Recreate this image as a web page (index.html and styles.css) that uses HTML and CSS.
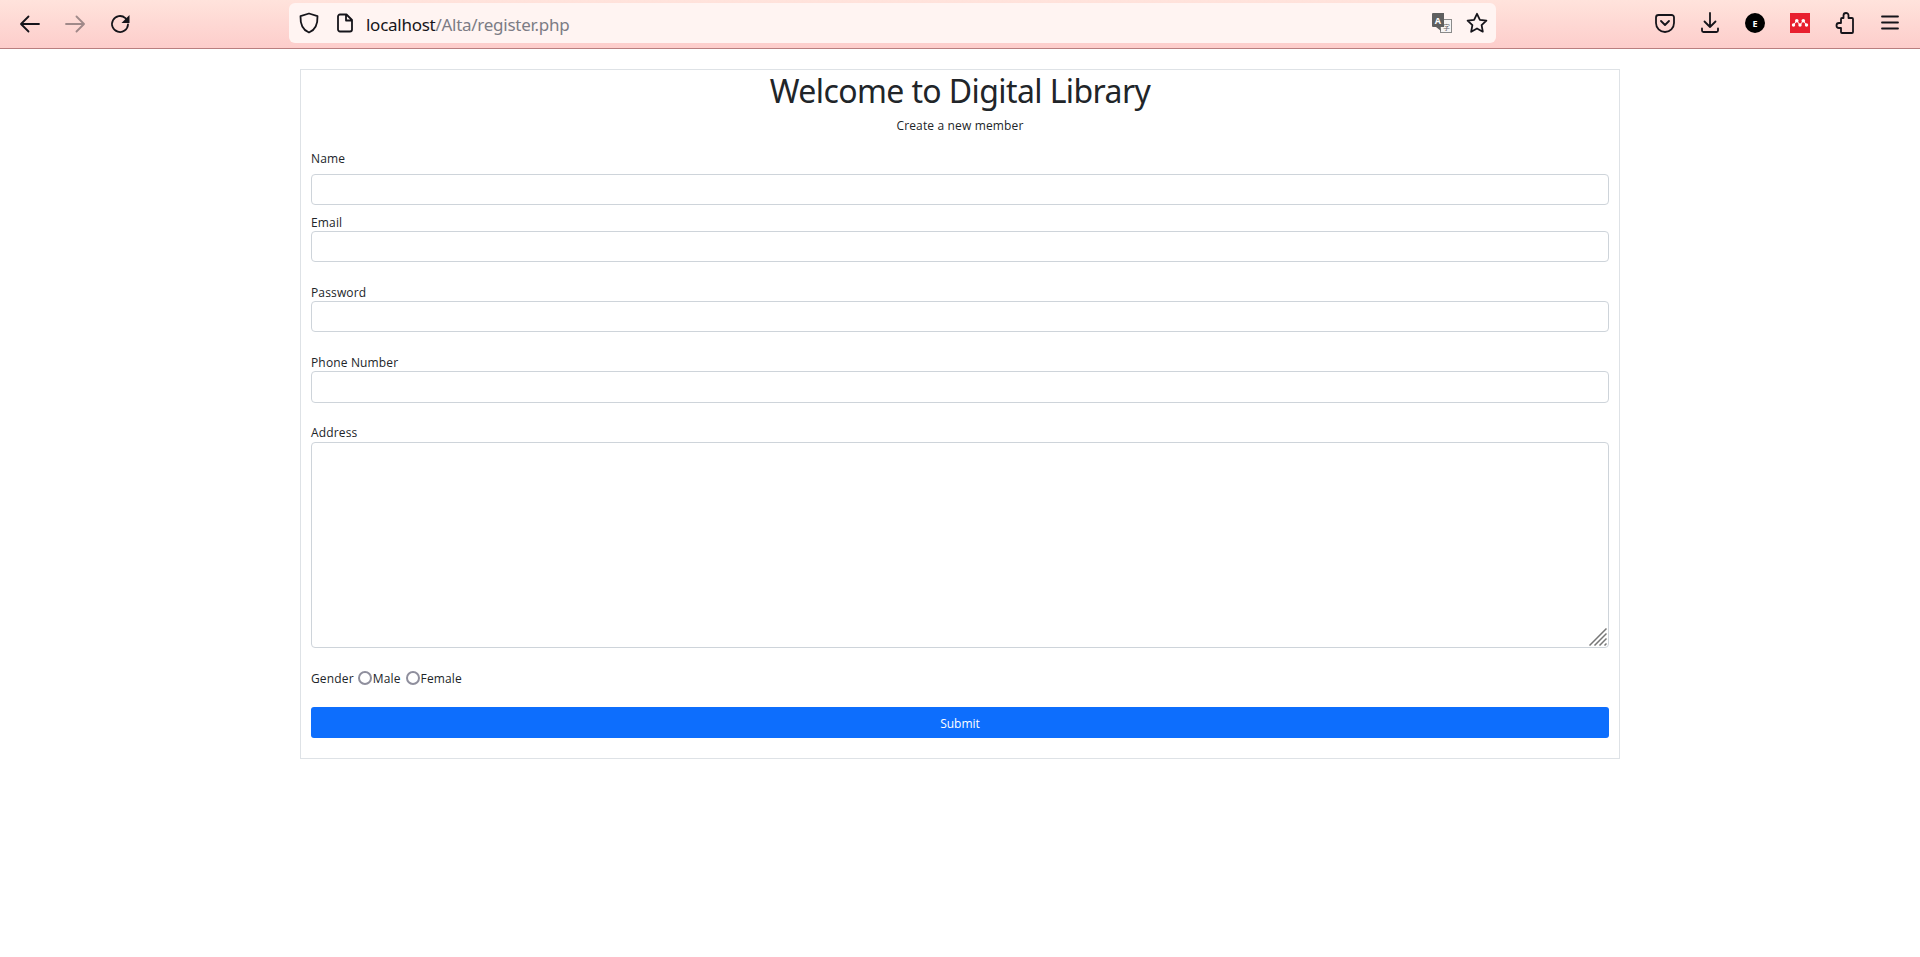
FILE: index.html
```html
<!DOCTYPE html>
<html>

<head>
  <title>Register</title>
  <link rel="stylesheet" href="styles.css">
</head>

<body>
  <header class="toolbar">
    <div class="nav-buttons">
      <svg class="icon" viewBox="0 0 24 24"><path d="M21 12H3.500M10.500 4.500L3 12l7.500 7.500"/></svg>
      <svg class="icon faded" viewBox="0 0 24 24"><path d="M3 12h17.500M13.500 4.500L21 12l-7.500 7.500"/></svg>
      <svg class="icon" viewBox="0 0 24 24"><path d="M20 12.500a8 8 0 1 1-2.600-6.400L20 9"/><path class="solid" d="M21.500 3v8h-8z"/></svg>
    </div>
    <div class="urlbar">
      <svg class="icon" viewBox="0 0 24 24"><path d="M12 2.500l8.500 2.700c.3 7.500-1.500 13.500-8.500 16.300-7-2.800-8.800-8.800-8.500-16.300z"/></svg>
      <svg class="icon page" viewBox="0 0 24 24"><path d="M5 5.500a2 2 0 0 1 2-2h6.500L19 9v9.500a2 2 0 0 1-2 2H7a2 2 0 0 1-2-2zM13 3.500V9.500H19"/></svg>
      <span class="url">localhost<span class="url-path">/Alta/register.php</span></span>
      <svg class="translate" viewBox="0 0 20 20">
        <rect class="translate-back" x="8.500" y="6.500" width="11" height="13"/>
        <path class="translate-front" d="M1 0h11v14H8l1 4-5-4H1a1 1 0 0 1-1-1V1a1 1 0 0 1 1-1z"/>
        <text x="6" y="10.500" class="translate-letter">A</text>
        <text x="14.500" y="16.500" class="translate-letter-2">字</text>
      </svg>
      <svg class="icon star" viewBox="0 0 24 24"><path d="M12 2.800l2.900 6 6.500.9-4.800 4.500 1.200 6.500-5.800-3.200-5.800 3.200 1.200-6.500-4.800-4.500 6.500-.9z"/></svg>
    </div>
    <div class="tools">
      <svg class="icon" viewBox="0 0 24 24"><path d="M5.500 4h13A2.500 2.500 0 0 1 21 6.500V12a9 9 0 0 1-18 0V6.500A2.500 2.500 0 0 1 5.500 4zM8 10l4 4 4-4"/></svg>
      <svg class="icon" viewBox="0 0 24 24"><path d="M12 2v14M6.500 10.500L12 16l5.500-5.500M4 17.500v2a1.500 1.500 0 0 0 1.500 1.500h13a1.500 1.500 0 0 0 1.500-1.500v-2"/></svg>
      <div class="avatar">E</div>
      <svg class="mendeley" viewBox="0 0 20 20">
        <rect width="20" height="20"/>
        <path d="M3.500 12L6.800 7.700 10 12l3.300-4.300 3.200 4.300"/>
        <circle cx="6.800" cy="7.700" r="1.800"/><circle cx="13.300" cy="7.700" r="1.800"/>
        <circle cx="10" cy="12" r="1.700"/><circle cx="3.500" cy="12" r="1.700"/><circle cx="16.500" cy="12" r="1.700"/>
      </svg>
      <svg class="icon" viewBox="0 0 24 24"><path d="M10.500 7V4.500a2.500 2.500 0 0 1 5 0V7H19a1 1 0 0 1 1 1v13a1 1 0 0 1-1 1H9a1 1 0 0 1-1-1v-4H6a2.500 2.500 0 0 1 0-5h2V8a1 1 0 0 1 1-1z"/></svg>
      <svg class="icon" viewBox="0 0 24 24"><path d="M4 5.500h16M4 11.500h16M4 17.500h16"/></svg>
    </div>
  </header>

  <main>
    <form class="card">
      <h1>Welcome to Digital Library</h1>
      <p class="subtitle">Create a new member</p>

      <label class="first-label">Name</label>
      <input type="text" class="field">

      <label class="email-label">Email</label>
      <input type="email" class="field">

      <label class="spaced">Password</label>
      <input type="password" class="field">

      <label class="spaced">Phone Number</label>
      <input type="text" class="field phone-field">

      <label class="address-label">Address</label>
      <div class="address-wrap">
        <textarea class="field address"></textarea>
        <svg class="resizer" viewBox="0 0 18 18">
          <path d="M0.500 17.500L17.500 0.500M5.500 17.500L17.500 5.500M10.500 17.500L17.500 10.500M15.500 17.500L17.500 15.500"/>
        </svg>
      </div>

      <div class="gender">
        <span>Gender</span>
        <input type="radio" name="gender"><span>Male</span>
        <input type="radio" name="gender"><span>Female</span>
      </div>

      <button type="button" class="submit-btn">Submit</button>
    </form>
  </main>
</body>

</html>
```

FILE: styles.css
```css
html,
body {
  margin: 0;
  padding: 0;
  height: 100%;
}

body {
  font-family: "Open Sans", "Noto Sans", sans-serif;
  font-size: 12px;
  letter-spacing: 0.15px;
  color: #212529;
  background-color: white;
}

/* Browser bar */
.toolbar {
  height: 48px;
  display: flex;
  align-items: center;
  background: linear-gradient(#ffe3dc, #fdcdcb);
  border-bottom: 1px solid #b97f80;
}

.icon {
  width: 24px;
  height: 24px;
  flex: none;
  fill: none;
  stroke: #15141a;
  stroke-width: 1.800;
  stroke-linecap: round;
  stroke-linejoin: round;
}

.icon .solid {
  fill: #15141a;
  stroke: none;
}

.faded {
  opacity: 0.4;
}

.nav-buttons {
  width: 289px;
  padding-left: 18px;
  box-sizing: border-box;
  display: flex;
  gap: 21px;
}

.urlbar {
  width: 1207px;
  height: 40px;
  margin-bottom: 2px;
  box-sizing: border-box;
  display: flex;
  align-items: center;
  padding-left: 8px;
  padding-right: 7px;
  background-color: #fff4f2;
  border-radius: 6px;
}

.page {
  margin-left: 12px;
}

.url {
  margin-left: 9px;
  padding-top: 2px;
  font-family: "Noto Sans", sans-serif;
  font-size: 17px;
  letter-spacing: -0.27px;
  color: #15141a;
  flex-grow: 1;
}

.url-path {
  color: #7c7c85;
}

.translate {
  width: 20px;
  height: 20px;
  margin-right: 13px;
}

.translate-back {
  fill: #f6f4f4;
  stroke: #8a8a8a;
  stroke-width: 1;
}

.translate-front {
  fill: #5f5f5f;
}

.translate-letter {
  fill: white;
  font-size: 9px;
  font-weight: bold;
  text-anchor: middle;
}

.translate-letter-2 {
  fill: #666;
  font-family: "Noto Sans CJK SC", sans-serif;
  font-size: 7px;
  text-anchor: middle;
}

.tools {
  flex-grow: 1;
  display: flex;
  align-items: center;
  justify-content: flex-end;
  gap: 21px;
  padding-right: 18px;
  margin-bottom: 2px;
}

.avatar {
  width: 20px;
  height: 20px;
  margin: 0 2px;
  border-radius: 50%;
  background-color: black;
  color: white;
  font-size: 9px;
  font-weight: bold;
  display: flex;
  align-items: center;
  justify-content: center;
}

.mendeley {
  width: 20px;
  height: 20px;
  margin: 0 2px;
}

.mendeley rect {
  fill: #e8202f;
}

.mendeley circle {
  fill: white;
}

.mendeley path {
  fill: none;
  stroke: white;
  stroke-width: 1;
}

/* Form card */
main {
  padding-top: 20px;
  display: flex;
  justify-content: center;
}

.card {
  width: 1320px;
  box-sizing: border-box;
  padding: 0 10px 20px;
  border: 1px solid #dee2e6;
  display: flex;
  flex-direction: column;
  align-items: stretch;
}

h1 {
  margin: 0;
  height: 42px;
  text-align: center;
  font-family: "Noto Sans", sans-serif;
  font-size: 32px;
  font-weight: 400;
  line-height: 42px;
  letter-spacing: -0.6px;
}

.subtitle {
  margin: 5px 0 0;
  text-align: center;
  line-height: 18px;
}

label {
  display: block;
  line-height: 18px;
  margin-bottom: -1px;
}

.first-label {
  margin-top: 15px;
  margin-bottom: 6px;
}

.email-label {
  margin-top: 9px;
}

.spaced {
  margin-top: 22px;
}

.address-label {
  margin-top: 21px;
  margin-bottom: 0;
}

.field {
  display: block;
  width: 100%;
  height: 31px;
  box-sizing: border-box;
  border: 1px solid #ced4da;
  border-radius: 4px;
  background-color: white;
  padding: 4px 8px;
}

.phone-field {
  height: 32px;
}

.address-wrap {
  position: relative;
}

.address {
  height: 206px;
  resize: none;
}

.resizer {
  position: absolute;
  right: 2px;
  bottom: 2px;
  width: 18px;
  height: 18px;
  fill: none;
  stroke: #777;
  stroke-width: 1.500;
}

.gender {
  display: flex;
  align-items: center;
  margin-top: 21px;
  height: 18px;
}

.gender input {
  appearance: none;
  width: 14px;
  height: 14px;
  box-sizing: border-box;
  margin: 0 1px 0 4px;
  border: 2px solid #8f8f9d;
  border-radius: 50%;
  background-color: white;
}

.gender input ~ input {
  margin-left: 5px;
}

.submit-btn {
  margin-top: 20px;
  height: 31px;
  padding-top: 2px;
  border: none;
  border-radius: 3px;
  background-color: #0d6efd;
  color: white;
  font-family: inherit;
  font-size: 12px;
  cursor: pointer;
}
```
